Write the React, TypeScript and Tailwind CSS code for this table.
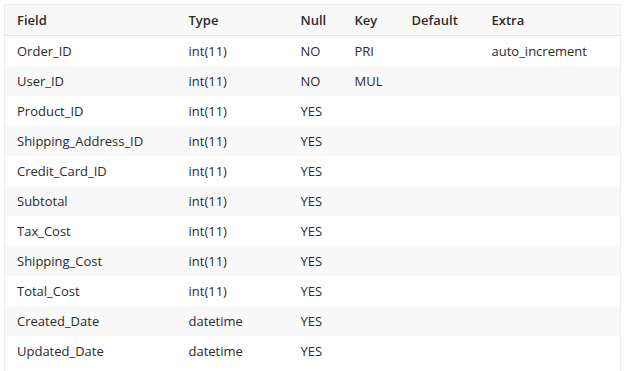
const rows: [string, string, string, string, string, string][] = [
  ["Order_ID", "int(11)", "NO", "PRI", "", "auto_increment"],
  ["User_ID", "int(11)", "NO", "MUL", "", ""],
  ["Product_ID", "int(11)", "YES", "", "", ""],
  ["Shipping_Address_ID", "int(11)", "YES", "", "", ""],
  ["Credit_Card_ID", "int(11)", "YES", "", "", ""],
  ["Subtotal", "int(11)", "YES", "", "", ""],
  ["Tax_Cost", "int(11)", "YES", "", "", ""],
  ["Shipping_Cost", "int(11)", "YES", "", "", ""],
  ["Total_Cost", "int(11)", "YES", "", "", ""],
  ["Created_Date", "datetime", "YES", "", "", ""],
  ["Updated_Date", "datetime", "YES", "", "", ""],
];

const headers = ["Field", "Type", "Null", "Key", "Default", "Extra"];
const widths = ["w-[172px]", "w-[112px]", "w-[54px]", "w-[57px]", "w-[80px]", ""];

export default function App() {
  return (
    <div className="h-[371px] w-[625px] overflow-hidden bg-white pl-1 pt-1 pr-1 font-['Open_Sans',sans-serif] text-[13px] text-[#2b2b2b]">
      <table className="w-[617px] table-fixed border-collapse border border-[#eeeeee]">
        <colgroup>
          {widths.map((w, i) => (
            <col key={i} className={w} />
          ))}
        </colgroup>
        <thead>
          <tr className="h-[31px] border-b border-[#e6e6e6] bg-[#f9f9f9]">
            {headers.map((h) => (
              <th key={h} className="px-3 pt-[2px] text-left font-semibold">
                {h}
              </th>
            ))}
          </tr>
        </thead>
        <tbody>
          {rows.map((r, i) => (
            <tr key={r[0]} className={`h-[30px] ${i % 2 === 1 ? "bg-[#f9f9f9]" : "bg-white"}`}>
              {r.map((c, j) => (
                <td key={j} className="px-3 pt-[2px] text-left">
                  {c}
                </td>
              ))}
            </tr>
          ))}
          <tr className="h-[30px]">
            <td colSpan={6} />
          </tr>
        </tbody>
      </table>
    </div>
  );
}
